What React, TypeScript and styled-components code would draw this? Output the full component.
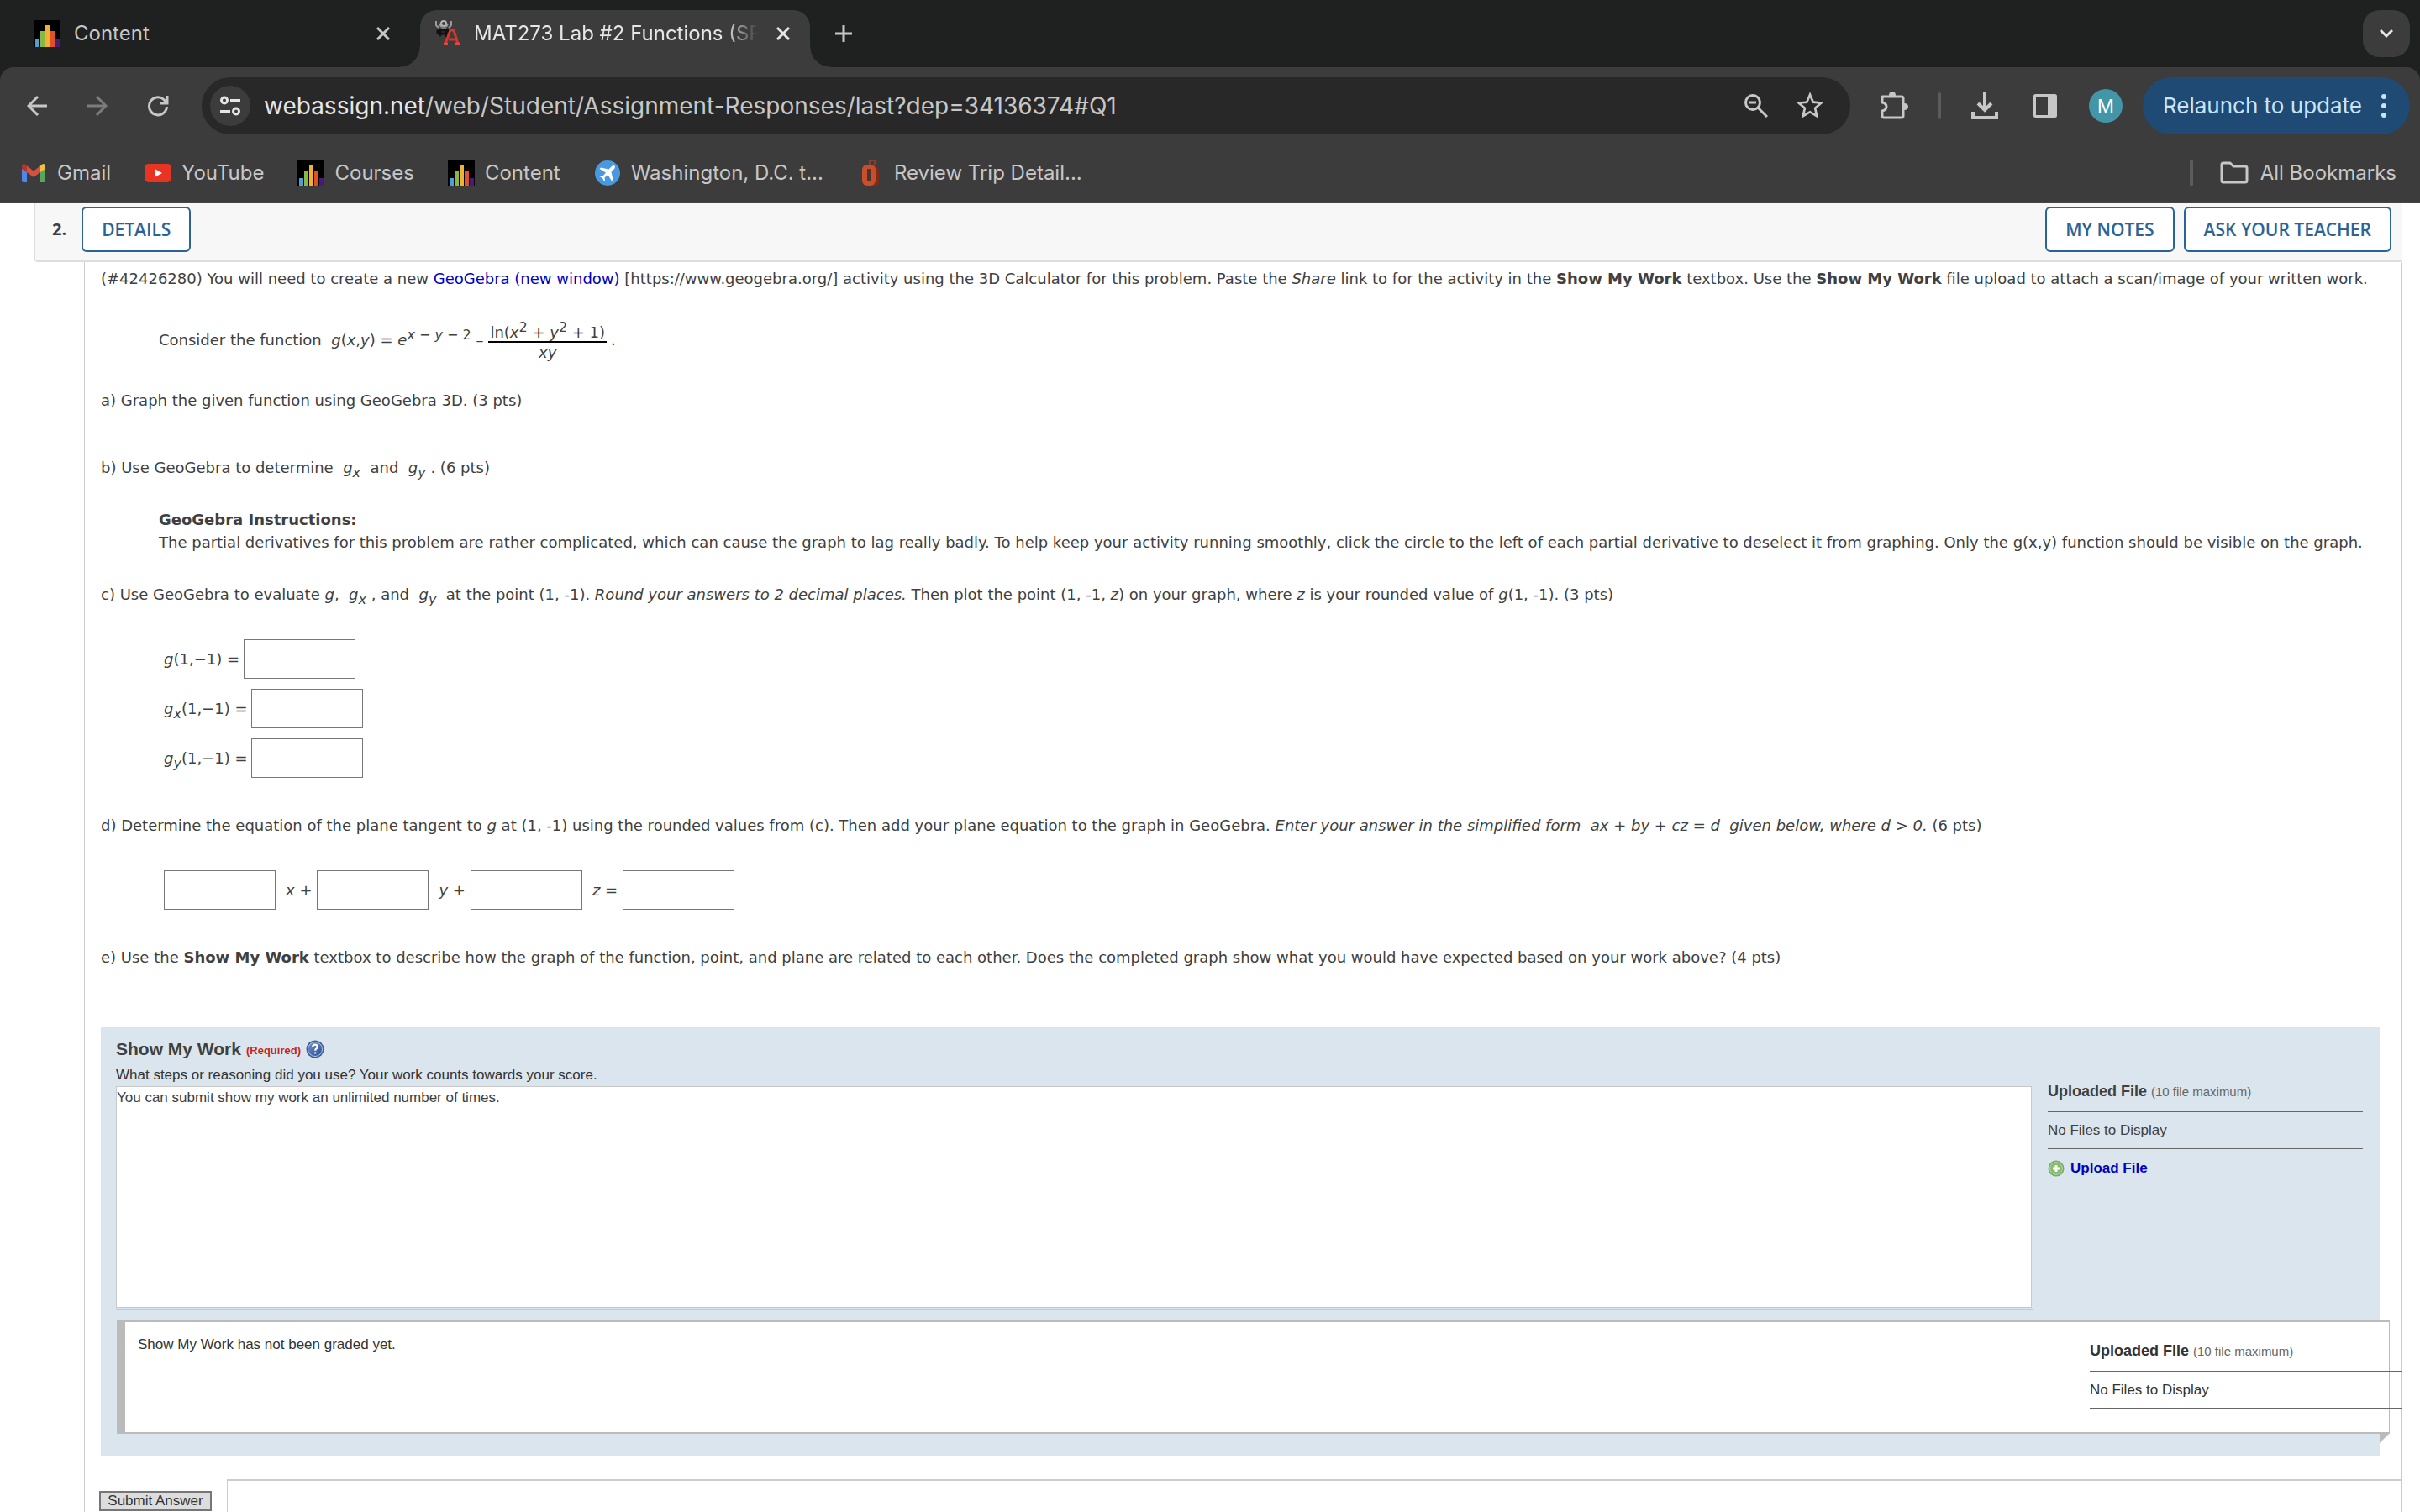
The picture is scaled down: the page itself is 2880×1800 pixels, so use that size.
import React, { useId } from "react";
import styled, { createGlobalStyle, css } from "styled-components";

const ui = `Inter, Roboto, sans-serif`;
const body = `"DejaVu Sans", "Noto Sans", sans-serif`;
const arial = `"Liberation Sans", Arial, sans-serif`;
const open = `"Open Sans", "Noto Sans", sans-serif`;

const Global = createGlobalStyle`
  *, *::before, *::after { box-sizing: border-box; }
  html, body { margin: 0; padding: 0; background: #fff; }
  button { cursor: pointer; }
`;

/* ---------- Browser window ---------- */

const Window = styled.div`
  display: flex;
  flex-direction: column;
  height: 100vh;
  overflow: hidden;
`;

const bare = css`
  display: flex;
  align-items: center;
  justify-content: center;
  flex: none;
  padding: 0;
  border: 0;
  background: none;
  color: #c7c7c7;
`;

const TabStrip = styled.div`
  display: flex;
  align-items: stretch;
  flex: none;
  height: 80px;
  padding-top: 12px;
  background: #1f2121;
`;

const Tab = styled.div<{ $active?: boolean }>`
  position: relative;
  display: flex;
  align-items: center;
  gap: 16px;
  width: ${(p) => (p.$active ? 464 : 500)}px;
  padding: ${(p) => (p.$active ? "0 18px 12px 16px" : "0 30px 12px 40px")};
  border-radius: 20px 20px 0 0;
  background: ${(p) => (p.$active ? "#3c3c3c" : "transparent")};
  color: ${(p) => (p.$active ? "#e6e6e6" : "#c7c7c7")};
  font: 24px/32px ${ui};

  ${(p) =>
    p.$active &&
    css`
      &::before,
      &::after {
        content: "";
        position: absolute;
        bottom: 0;
        width: 24px;
        height: 24px;
      }
      &::before {
        right: 100%;
        background: radial-gradient(circle at 0 0, transparent 23px, #3c3c3c 24px);
      }
      &::after {
        left: 100%;
        background: radial-gradient(circle at 100% 0, transparent 23px, #3c3c3c 24px);
      }
    `}
`;

const TabTitle = styled.span<{ $fade?: boolean }>`
  flex: 1;
  min-width: 0;
  white-space: nowrap;
  ${(p) =>
    p.$fade &&
    css`
      mask-image: linear-gradient(to right, #000 88%, transparent);
    `}
`;

const TabClose = styled.button<{ $active?: boolean }>`
  ${bare}
  width: 28px;
  height: 28px;
  color: ${(p) => (p.$active ? "#e6e6e6" : "#c7c7c7")};
`;

const NewTab = styled.button`
  ${bare}
  width: 56px;
  height: 56px;
  margin-left: 12px;
`;

const TabSearch = styled.button`
  ${bare}
  width: 56px;
  height: 56px;
  margin: 0 12px 0 auto;
  border-radius: 20px;
  background: #3c3c3c;
  color: #e6e6e6;
`;

const ToolbarBack = styled.div`
  flex: none;
  background: #1f2121;
`;

const Toolbar = styled.div`
  display: flex;
  align-items: center;
  height: 92px;
  padding: 0 12px 0 16px;
  border-radius: 16px 16px 0 0;
  background: #3c3c3c;
`;

const NavButton = styled.button<{ $dim?: boolean }>`
  ${bare}
  width: 56px;
  height: 56px;
  margin-right: 16px;
  color: ${(p) => (p.$dim ? "#7c7c7c" : "#c7c7c7")};
`;

const Omnibox = styled.div`
  display: flex;
  align-items: center;
  flex: 1;
  min-width: 0;
  height: 68px;
  margin-left: 8px;
  padding: 0 20px 0 10px;
  border-radius: 34px;
  background: #282828;
`;

const SiteInfo = styled.button`
  ${bare}
  width: 48px;
  height: 48px;
  border-radius: 50%;
  background: #3c3c3c;
  color: #e6e6e6;
`;

const Address = styled.div`
  flex: 1;
  min-width: 0;
  margin-left: 16px;
  color: #c7c7c7;
  font: 28px/36px ${ui};
  white-space: nowrap;
  overflow: hidden;

  b {
    color: #e6e6e6;
    font-weight: 400;
  }
`;

const OmniButton = styled.button`
  ${bare}
  width: 56px;
  height: 56px;
  margin-left: 8px;
`;

const Actions = styled.div`
  display: flex;
  align-items: center;
  margin-left: 16px;
`;

const ActionButton = styled.button`
  ${bare}
  width: 72px;
  height: 56px;
`;

const Divider = styled.span`
  flex: none;
  width: 4px;
  height: 32px;
  margin: 0 16px;
  border-radius: 2px;
  background: #5c5c5c;
`;

const Avatar = styled.button`
  ${bare}
  width: 40px;
  height: 40px;
  margin: 0 24px 0 16px;
  border-radius: 50%;
  background: #4396a8;
  color: #fff;
  font: 22px/40px ${ui};
`;

const Relaunch = styled.button`
  ${bare}
  gap: 23px;
  height: 68px;
  padding: 0 28px 0 24px;
  border-radius: 34px;
  background: #1f4a73;
  color: #c9e4fb;
  font: 26px/32px ${ui};
`;

const Bookmarks = styled.nav`
  display: flex;
  align-items: center;
  flex: none;
  height: 70px;
  padding: 0 28px 0 24px;
  border-bottom: 2px solid #464646;
  background: #3c3c3c;
  font: 24px/32px ${ui};
`;

const Bookmark = styled.a<{ $last?: boolean }>`
  display: flex;
  align-items: center;
  gap: ${(p) => (p.$last ? 14 : 12)}px;
  margin: ${(p) => (p.$last ? "0 0 0 16px" : "0 40px 0 0")};
  color: #c7c7c7;
  text-decoration: none;
  white-space: nowrap;
`;

const Spring = styled.span`
  flex: 1;
`;

/* ---------- Page ---------- */

const Page = styled.main`
  flex: 1;
  min-height: 0;
  overflow: hidden;
  padding: 0 21px 0 41px;
  background: #fff;
  color: #404040;
  font: 18px/27px ${body};
`;

const QuestionHead = styled.header`
  display: flex;
  align-items: center;
  gap: 11px;
  height: 70px;
  padding: 0 12px 7px 20px;
  border: solid #ddd;
  border-width: 0 1px 2px;
  border-radius: 0 0 4px 4px;
  background: #f7f7f7;
`;

const Number = styled.h2`
  flex: 1;
  display: flex;
  align-items: center;
  gap: 18px;
  margin: 0;
  color: #404040;
  font: 700 20px/28px ${open};
`;

const HeadButton = styled.button`
  height: 54px;
  padding: 0 22px;
  border: 2px solid #2a6496;
  border-radius: 6px;
  background: #fff;
  color: #2a6496;
  font: 600 21px/28px ${open};
`;

const Question = styled.section`
  margin-left: 59px;
  border: solid #ccc;
  border-width: 0 2px 0 1px;
`;

const Content = styled.div`
  padding: 6px 25px 28px 19px;
`;

const Para = styled.p<{ $top: number }>`
  margin: ${(p) => p.$top}px 0 0;
`;

const Indent = styled.div<{ $top: number; $left?: number }>`
  display: flex;
  flex-direction: column;
  gap: 12px;
  margin: ${(p) => p.$top}px 0 0 ${(p) => p.$left ?? 69}px;
`;

const Formula = styled.div`
  display: flex;
  align-items: center;
  white-space: pre;
`;

const Sup = styled.sup`
  font-size: 16px;
  line-height: 0;
  vertical-align: 7px;
`;

const Sub = styled.sub`
  font-size: 16px;
  line-height: 0;
  vertical-align: -5px;
`;

const Fraction = styled.span`
  display: inline-flex;
  flex-direction: column;
  align-items: center;
  margin: 10px 5px 0 6px;
  line-height: 24px;
`;

const Numerator = styled.span`
  padding: 0 2px;
  border-bottom: 2px solid #000;
  line-height: 20px;
`;

const Link = styled.a<{ $bold?: boolean }>`
  color: #0000bf;
  font-weight: ${(p) => (p.$bold ? 700 : 400)};
  text-decoration: none;
`;

const Line = styled.div`
  display: flex;
  align-items: center;
`;

const Label = styled.label<{ $after?: boolean }>`
  padding: ${(p) => (p.$after ? "0 6px 0 12px" : "0 5px 0 0")};
  white-space: pre;
`;

const Answer = styled.input`
  width: 133px;
  height: 47px;
  padding: 0 8px;
  border: 1px solid #777;
  border-radius: 0;
  background: #fff;
  font: 18px/27px ${body};
`;

/* ---------- Show My Work ---------- */

const Work = styled.section`
  margin-top: 70px;
  padding: 10px 20px 26px 18px;
  background: #dbe5ed;
  font: 17px/26px ${arial};
`;

const WorkBody = styled.div`
  display: flex;
  align-items: flex-start;
  gap: 17px;
`;

const WorkMain = styled.div`
  flex: 1;
  min-width: 0;
`;

const WorkTitle = styled.h3`
  display: flex;
  align-items: center;
  gap: 6px;
  margin: 0;
  font: 700 21px/28px ${arial};

  small {
    padding-top: 4px;
    color: #cc2219;
    font-size: 13px;
  }
`;

const HelpButton = styled.button`
  ${bare}
`;

const WorkPrompt = styled.p`
  margin: 2px 0 0;
  color: #333;
`;

const Editor = styled.div`
  display: flex;
  border: solid #c8c8c8;
  border-width: 0 1px 1px 0;
`;

const WorkText = styled.textarea`
  display: block;
  flex: 1;
  height: 264px;
  margin: 0 1px 1px 0;
  padding: 0;
  border: 1px solid #c8c8c8;
  background: #fff;
  color: #404040;
  font: 17px/26px ${arial};
  resize: none;
  outline: none;
`;

const Files = styled.div`
  flex: none;
  width: 375px;
  padding-top: 53px;
`;

const FilesTitle = styled.h4`
  margin: 0;
  padding-bottom: 10px;
  font: 700 18px/26px ${arial};

  small {
    color: #666;
    font-size: 15px;
    font-weight: 400;
  }
`;

const FilesNone = styled.p`
  margin: 0;
  padding: 9px 0 8px;
  border: solid #666;
  border-width: 1px 0;
`;

const Upload = styled.div`
  display: flex;
  align-items: center;
  gap: 7px;
  padding-top: 10px;
`;

const Graded = styled.div`
  position: relative;
  display: flex;
  justify-content: space-between;
  margin: 13px -32px 0 1px;
  padding: 14px 0 28px 15px;
  border: solid #bbb;
  border-width: 2px 1px 2px 10px;
  background: #fff;
  color: #333;

  > ${Files} {
    width: 372px;
    margin-right: -16px;
    padding-top: 7px;
  }

  &::after {
    content: "";
    position: absolute;
    top: 100%;
    right: -1px;
    border: 6px solid transparent;
    border-top-color: #bbb;
    border-left-color: #bbb;
    margin-top: 1px;
  }
`;

const Foot = styled.div`
  display: flex;
  height: 60px;
`;

const SubmitCell = styled.div`
  flex: none;
  width: 169px;
  padding: 14px 0 0 17px;
`;

const Submit = styled.button`
  display: block;
  width: 134px;
  padding: 0;
  border: 2px solid #767676;
  background: #ddd;
  color: #333;
  font: 17px/20px ${arial};
`;

const FootRule = styled.div`
  flex: 1;
  border: solid #ccc;
  border-width: 2px 0 0 1px;
`;

/* ---------- Icons ---------- */

const Stroke = ({ d, size = 24, w = 3 }: { d: string; size?: number; w?: number }) => (
  <svg width={size} height={size} viewBox={`0 0 ${size} ${size}`} fill="none" stroke="currentColor" strokeWidth={w} aria-hidden>
    <path d={d} />
  </svg>
);

const BarsIcon = () => (
  <svg width="32" height="32" viewBox="0 0 32 32" aria-hidden>
    <rect width="32" height="32" fill="#000" />
    <rect x="2" y="22" width="5" height="10" fill="#4ba0dc" />
    <rect x="8" y="13" width="5" height="19" fill="#86b944" />
    <rect x="14" y="6" width="5" height="26" fill="#f2b134" />
    <rect x="20" y="13" width="5" height="19" fill="#dd5228" />
    <rect x="26" y="22" width="5" height="10" fill="#4b1a78" />
  </svg>
);

const AntIcon = () => (
  <svg width="32" height="32" viewBox="0 0 32 32" fill="none" aria-hidden>
    <path d="M3 1v5l3 3M7 4l2 4M21 1v5l-3 3M17 4l-2 4" stroke="#9a9a9a" strokeWidth="2" />
    <circle cx="12" cy="4" r="3" stroke="#b5b5b5" strokeWidth="2" />
    <path d="M9 8h6v4H9z" fill="#777" />
    <path d="M5 17v-4l3-1h8l3 2v2M8 12v4h7v-4M7 19l2-3M15 17v3" stroke="#121212" strokeWidth="3" />
    <path d="m14 28 6-16h4l5 16M18 23h8" stroke="#d8352c" strokeWidth="3" />
    <path d="M12 28h5M25 28h6" stroke="#e8473c" strokeWidth="3" />
  </svg>
);

const GmailIcon = () => (
  <svg width="32" height="32" viewBox="0 0 32 32" aria-hidden>
    <path d="M2 10v15q0 2 2 2h4V14z" fill="#4f86ec" />
    <path d="M24 14v13h4q2 0 2-2V10z" fill="#58a65c" />
    <path d="M8 7.500 16 13.500 24 7.500V15l-8 6-8-6z" fill="#d9503f" />
    <path d="M2 10V8q0-3 3-3l3 2.500V15l-6-4z" fill="#b3342b" />
    <path d="M24 7.500 27 5q3 0 3 3v3l-6 4z" fill="#f1bf42" />
  </svg>
);

const YouTubeIcon = () => (
  <svg width="32" height="32" viewBox="0 0 32 32" aria-hidden>
    <rect y="5" width="32" height="22" rx="5" fill="#e93323" />
    <path d="M13 11.500v9l8-4.500z" fill="#fff" />
  </svg>
);

const PlaneIcon = () => (
  <svg width="32" height="32" viewBox="0 0 32 32" aria-hidden>
    <circle cx="16" cy="16" r="15" fill="#479adf" />
    <path d="M24.500 7.500c-1.500-1-3 0-4 1l-3 3-9.500-2-1.500 1.500 7.500 4.500-3.500 4-3-.500-1 1 3.500 2 2 3.500 1-1-.500-3 4-3.500 4.500 7.500 1.500-1.500-2-9.500 3-3c1-1 2-2.500 1-4z" fill="#fff" />
  </svg>
);

const CaseIcon = () => (
  <svg width="32" height="32" viewBox="0 0 32 32" aria-hidden>
    <path d="M15 7V1h6v6" fill="none" stroke="#84402c" strokeWidth="2" />
    <path d="M19 7q7 0 7 7v14q0 3-3 3h-6z" fill="#7c2c18" />
    <rect x="6" y="6" width="16" height="25" rx="6" fill="#c94f2c" />
    <rect x="12" y="11" width="4" height="15" rx="1" fill="#4a3530" />
  </svg>
);

const HelpIcon = () => {
  const id = useId();
  return (
    <svg width="22" height="22" viewBox="0 0 22 22" aria-hidden>
      <defs>
        <linearGradient id={id} x1="0" y1="0" x2="1" y2="1">
          <stop offset="0" stopColor="#6f94cf" />
          <stop offset="1" stopColor="#2b4a92" />
        </linearGradient>
      </defs>
      <circle cx="11" cy="11" r="10.500" fill="#3d5d9f" />
      <circle cx="11" cy="11" r="8.500" fill={`url(#${id})`} stroke="#b5c7e4" />
      <path d="M8 8.500q.200-2.800 3-2.800t3 2.600q0 1.500-1.600 2.300-1.200.600-1.200 2.200M11.200 14.500v2" fill="none" stroke="#fff" strokeWidth="2.200" />
    </svg>
  );
};

const PlusIcon = () => (
  <svg width="20" height="20" viewBox="0 0 20 20" aria-hidden>
    <circle cx="10" cy="10" r="9.500" fill="#75a968" />
    <circle cx="10" cy="10" r="7.500" fill="#86bd6c" stroke="#b4d7a6" />
    <path d="M10 6v8M6 10h8" stroke="#fff" strokeWidth="3" />
  </svg>
);

const StarIcon = () => (
  <svg width="40" height="40" viewBox="0 0 24 24" fill="currentColor" aria-hidden>
    <path d="M22 9.240l-7.190-.620L12 2 9.190 8.630 2 9.240l5.460 4.730L5.820 21 12 17.270 18.180 21l-1.630-7.030L22 9.240zM12 15.400l-3.760 2.270 1-4.280-3.320-2.880 4.380-.380L12 6.100l1.710 4.040 4.380.380-3.320 2.880 1 4.280L12 15.400z" />
  </svg>
);

const bookmarks = [
  { name: "Gmail", icon: <GmailIcon /> },
  { name: "YouTube", icon: <YouTubeIcon /> },
  { name: "Courses", icon: <BarsIcon /> },
  { name: "Content", icon: <BarsIcon /> },
  { name: "Washington, D.C. t...", icon: <PlaneIcon /> },
  { name: "Review Trip Detail...", icon: <CaseIcon /> },
];

const Chrome = () => (
  <>
    <TabStrip>
      <Tab>
        <BarsIcon />
        <TabTitle>Content</TabTitle>
        <TabClose aria-label="Close tab"><Stroke size={16} d="M1 1 15 15M15 1 1 15" /></TabClose>
      </Tab>
      <Tab $active>
        <AntIcon />
        <TabTitle $fade>MAT273 Lab #2 Functions (SP</TabTitle>
        <TabClose $active aria-label="Close tab"><Stroke size={16} d="M1 1 15 15M15 1 1 15" /></TabClose>
      </Tab>
      <NewTab aria-label="New tab"><Stroke size={20} d="M10 0V20M0 10H20" /></NewTab>
      <TabSearch aria-label="Search tabs"><Stroke size={16} d="M1 4 8 11 15 4" /></TabSearch>
    </TabStrip>
    <ToolbarBack>
      <Toolbar>
        <NavButton aria-label="Back"><Stroke size={24} d="M24 12H2M13 1 2 12 13 23" /></NavButton>
        <NavButton $dim aria-label="Forward"><Stroke size={24} d="M0 12H22M11 1 22 12 11 23" /></NavButton>
        <NavButton aria-label="Reload"><Stroke size={26} d="M23.500 14A10.500 10.500 0 1 1 20 5.500L23 9M24 1V10H15" /></NavButton>
        <Omnibox>
          <SiteInfo aria-label="Site information">
            <svg width="24" height="24" viewBox="0 0 24 24" fill="none" stroke="currentColor" strokeWidth="3" aria-hidden>
              <circle cx="5" cy="5.500" r="3.500" /><path d="M12 5.500H24M0 18.500H12" /><circle cx="19" cy="18.500" r="3.500" />
            </svg>
          </SiteInfo>
          <Address><b>webassign.net</b>/web/Student/Assignment-Responses/last?dep=34136374#Q1</Address>
          <OmniButton aria-label="Zoom"><Stroke size={28} d="M18.500 10A8.500 8.500 0 1 1 1.500 10A8.500 8.500 0 1 1 18.500 10M16 16 27 27M6 10H14" /></OmniButton>
          <OmniButton aria-label="Bookmark this tab"><StarIcon /></OmniButton>
        </Omnibox>
        <Actions>
          <ActionButton aria-label="Extensions">
            <svg width="36" height="36" viewBox="0 0 36 36" fill="none" stroke="currentColor" strokeWidth="3" strokeLinejoin="round" aria-hidden>
              <path d="M4 7h23q2 0 2 2v21q0 2-2 2H6q-2 0-2-2v-6q5-1 5-5t-5-5z" />
              <path d="M12 6q0-5 4-5t4 5zM30 15q5 0 5 4t-5 4z" fill="currentColor" stroke="none" />
            </svg>
          </ActionButton>
          <Divider />
          <ActionButton aria-label="Downloads">
            <Stroke size={34} w={4} d="M17 1V21M9 14 17 22 25 14M3 24V31H31V24" />
          </ActionButton>
          <ActionButton aria-label="Side panel">
            <svg width="30" height="30" viewBox="0 0 30 30" aria-hidden>
              <rect x="2.500" y="2.500" width="25" height="25" rx="1" fill="none" stroke="currentColor" strokeWidth="3" />
              <path d="M18 2h10v26H18z" fill="currentColor" />
            </svg>
          </ActionButton>
          <Avatar aria-label="Profile">M</Avatar>
          <Relaunch>
            Relaunch to update
            <svg width="6" height="30" viewBox="0 0 6 30" fill="currentColor" aria-hidden>
              <circle cx="3" cy="4" r="3" /><circle cx="3" cy="15" r="3" /><circle cx="3" cy="26" r="3" />
            </svg>
          </Relaunch>
        </Actions>
      </Toolbar>
    </ToolbarBack>
    <Bookmarks>
      {bookmarks.map((b) => (
        <Bookmark key={b.name} href="#">{b.icon}{b.name}</Bookmark>
      ))}
      <Spring />
      <Divider />
      <Bookmark $last href="#">
        <svg width="34" height="28" viewBox="0 0 34 28" fill="none" stroke="currentColor" strokeWidth="3" strokeLinejoin="round" aria-hidden>
          <path d="M2 4q0-2 2-2h8l4 4h14q2 0 2 2v15q0 2-2 2H4q-2 0-2-2z" />
        </svg>
        All Bookmarks
      </Bookmark>
    </Bookmarks>
  </>
);

const UploadedFiles = ({ children }: { children?: React.ReactNode }) => (
  <Files>
    <FilesTitle>Uploaded File <small>(10 file maximum)</small></FilesTitle>
    <FilesNone>No Files to Display</FilesNone>
    {children}
  </Files>
);

export default function App() {
  return (
    <Window>
      <Global />
      <Chrome />
      <Page>
        <QuestionHead>
          <Number>2. <HeadButton>DETAILS</HeadButton></Number>
          <HeadButton>MY NOTES</HeadButton>
          <HeadButton>ASK YOUR TEACHER</HeadButton>
        </QuestionHead>
        <Question>
          <Content>
            <Para $top={0}>
              (#42426280) You will need to create a new <Link href="#">GeoGebra (new window)</Link> [https://www.geogebra.org/] activity using the 3D Calculator for this problem. Paste the <i>Share</i> link to for the activity in the <b>Show My Work</b> textbox. Use the <b>Show My Work</b> file upload to attach a scan/image of your written work.
            </Para>
            <Indent $top={31}>
              <Formula>
                <span>Consider the function&nbsp; <i>g</i>(<i>x</i>,<i>y</i>) = <i>e</i><Sup><i>x</i> − <i>y</i> − 2</Sup> –</span>
                <Fraction>
                  <Numerator>ln(<i>x</i><Sup>2</Sup> + <i>y</i><Sup>2</Sup> + 1)</Numerator>
                  <i>xy</i>
                </Fraction>
                <span>.</span>
              </Formula>
            </Indent>
            <Para $top={31}>a) Graph the given function using GeoGebra 3D. (3 pts)</Para>
            <Para $top={53}>b) Use GeoGebra to determine &nbsp;<i>g<Sub>x</Sub></i>&nbsp; and &nbsp;<i>g<Sub>y</Sub></i> . (6 pts)</Para>
            <Indent $top={35}>
              <div>
                <b>GeoGebra Instructions:</b><br />
                The partial derivatives for this problem are rather complicated, which can cause the graph to lag really badly. To help keep your activity running smoothly, click the circle to the left of each partial derivative to deselect it from graphing. Only the g(x,y) function should be visible on the graph.
              </div>
            </Indent>
            <Para $top={35}>
              c) Use GeoGebra to evaluate <i>g</i>, &nbsp;<i>g<Sub>x</Sub></i> , and &nbsp;<i>g<Sub>y</Sub></i>&nbsp; at the point (1, -1). <i>Round your answers to 2 decimal places.</i> Then plot the point (1, -1, <i>z</i>) on your graph, where <i>z</i> is your rounded value of <i>g</i>(1, -1). (3 pts)
            </Para>
            <Indent $top={40} $left={75}>
              <Line><Label htmlFor="g"><i>g</i>(1,−1) =</Label><Answer id="g" /></Line>
              <Line><Label htmlFor="gx"><i>g<Sub>x</Sub></i>(1,−1) =</Label><Answer id="gx" /></Line>
              <Line><Label htmlFor="gy"><i>g<Sub>y</Sub></i>(1,−1) =</Label><Answer id="gy" /></Line>
            </Indent>
            <Para $top={43}>
              d) Determine the equation of the plane tangent to <i>g</i> at (1, -1) using the rounded values from (c). Then add your plane equation to the graph in GeoGebra. <i>Enter your answer in the simplified form &nbsp;ax + by + cz = d&nbsp; given below, where d &gt; 0.</i> (6 pts)
            </Para>
            <Indent $top={40} $left={75}>
              <Line>
                <Answer id="a" /><Label $after htmlFor="a"><i>x</i> +</Label>
                <Answer id="b" /><Label $after htmlFor="b"><i>y</i> +</Label>
                <Answer id="c" /><Label $after htmlFor="c"><i>z</i> =</Label>
                <Answer id="d" aria-label="d" />
              </Line>
            </Indent>
            <Para $top={43}>
              e) Use the <b>Show My Work</b> textbox to describe how the graph of the function, point, and plane are related to each other. Does the completed graph show what you would have expected based on your work above? (4 pts)
            </Para>
            <Work>
              <WorkBody>
                <WorkMain>
                  <WorkTitle>Show My Work <small>(Required)</small><HelpButton aria-label="Help"><HelpIcon /></HelpButton></WorkTitle>
                  <WorkPrompt id="prompt">What steps or reasoning did you use? Your work counts towards your score.</WorkPrompt>
                  <Editor>
                    <WorkText aria-labelledby="prompt" spellCheck={false} defaultValue="You can submit show my work an unlimited number of times." />
                  </Editor>
                </WorkMain>
                <UploadedFiles>
                  <Upload><PlusIcon /><Link $bold href="#">Upload File</Link></Upload>
                </UploadedFiles>
              </WorkBody>
              <Graded>
                <span>Show My Work has not been graded yet.</span>
                <UploadedFiles />
              </Graded>
            </Work>
          </Content>
          <Foot>
            <SubmitCell><Submit>Submit Answer</Submit></SubmitCell>
            <FootRule />
          </Foot>
        </Question>
      </Page>
    </Window>
  );
}
